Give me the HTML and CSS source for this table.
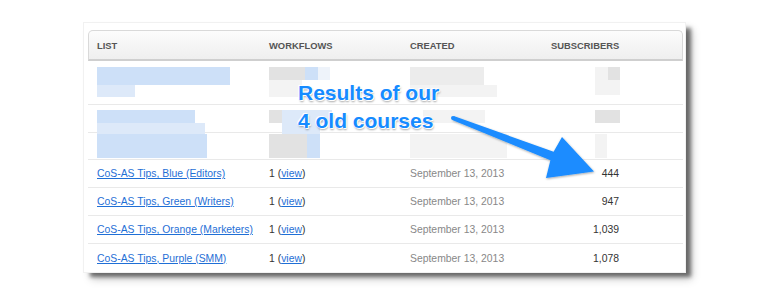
FILE: index.html
```html
<!DOCTYPE html>
<html>
<head>
<meta charset="utf-8">
<link rel="stylesheet" href="styles.css">
</head>
<body>
<div class="card">
  <div class="table">
    <div class="row head">
      <div class="cell">LIST</div>
      <div class="cell">WORKFLOWS</div>
      <div class="cell">CREATED</div>
      <div class="cell">SUBSCRIBERS</div>
    </div>
    <div class="row blur r1">
      <div class="cell">
        <div class="bar b-blue" style="width:133px;height:18px"></div>
        <div class="bar b-blue2" style="width:38px;height:12px"></div>
      </div>
      <div class="cell">
        <div class="seg">
          <div class="bar b-grey" style="width:36px;height:13px"></div>
          <div class="bar b-blue" style="width:13px;height:13px"></div>
          <div class="bar b-lt" style="width:12px;height:13px"></div>
        </div>
        <div class="bar b-lgrey" style="width:33px;height:17px"></div>
      </div>
      <div class="cell">
        <div class="bar b-grey2" style="width:74px;height:18px"></div>
        <div class="bar b-lgrey" style="width:87px;height:12px"></div>
      </div>
      <div class="cell end">
        <div class="seg">
          <div class="bar b-lgrey" style="width:13px;height:13px"></div>
          <div class="bar b-grey" style="width:12px;height:13px"></div>
        </div>
        <div class="bar b-lgrey" style="width:25px;height:15px"></div>
      </div>
    </div>
    <div class="row blur r2">
      <div class="cell">
        <div class="bar b-blue" style="width:98px;height:13px"></div>
        <div class="bar b-blue2" style="width:108px;height:12px"></div>
      </div>
      <div class="cell">
        <div class="seg">
          <div class="bar b-grey" style="width:13px;height:13px"></div>
          <div class="bar b-blue2" style="width:50px;height:13px"></div>
        </div>
        <div class="bar b-blue2 indent" style="width:38px;height:12px"></div>
      </div>
      <div class="cell">
        <div class="bar b-lgrey indent" style="width:62px;height:13px"></div>
      </div>
      <div class="cell end">
        <div class="bar b-grey" style="width:25px;height:13px"></div>
      </div>
    </div>
    <div class="row blur r3">
      <div class="cell">
        <div class="bar b-blue" style="width:110px;height:24px"></div>
      </div>
      <div class="cell">
        <div class="seg">
          <div class="bar b-grey" style="width:38px;height:24px"></div>
          <div class="bar b-blue" style="width:13px;height:24px"></div>
        </div>
      </div>
      <div class="cell">
        <div class="bar b-lgrey" style="width:97px;height:24px"></div>
      </div>
      <div class="cell end">
        <div class="bar b-lgrey" style="width:12px;height:24px"></div>
      </div>
    </div>
    <div class="row data">
      <div class="cell"><a href="#">CoS-AS Tips, Blue (Editors)</a></div>
      <div class="cell wf">1 (<a href="#">view</a>)</div>
      <div class="cell date">September 13, 2013</div>
      <div class="cell num">444</div>
    </div>
    <div class="row data">
      <div class="cell"><a href="#">CoS-AS Tips, Green (Writers)</a></div>
      <div class="cell wf">1 (<a href="#">view</a>)</div>
      <div class="cell date">September 13, 2013</div>
      <div class="cell num">947</div>
    </div>
    <div class="row data">
      <div class="cell"><a href="#">CoS-AS Tips, Orange (Marketers)</a></div>
      <div class="cell wf">1 (<a href="#">view</a>)</div>
      <div class="cell date">September 13, 2013</div>
      <div class="cell num">1,039</div>
    </div>
    <div class="row data last">
      <div class="cell"><a href="#">CoS-AS Tips, Purple (SMM)</a></div>
      <div class="cell wf">1 (<a href="#">view</a>)</div>
      <div class="cell date">September 13, 2013</div>
      <div class="cell num">1,078</div>
    </div>
  </div>
</div>
<div class="note">Results of our<br>4 old courses</div>
<svg class="arrow" width="770" height="306" viewBox="0 0 770 306">
  <defs>
    <filter id="sh" x="-10%" y="-10%" width="130%" height="130%">
      <feDropShadow dx="0.5" dy="1" stdDeviation="0.8" flood-color="#000" flood-opacity="0.35"/>
    </filter>
  </defs>
  <polygon filter="url(#sh)" fill="#1a8cff" points="453.7,116 553.6,151.8 562,137 594,171.5 546,178 550.4,160.2 452.3,120"/>
  <circle cx="453" cy="118" r="2" fill="#1a8cff"/>
</svg>
</body>
</html>
```
FILE: styles.css
```css
html, body {
  margin: 0;
  padding: 0;
  background: #fff;
}
body {
  position: relative;
  width: 770px;
  height: 306px;
  overflow: hidden;
  padding: 23px 0 0 84px;
  box-sizing: border-box;
  font-family: "Liberation Sans", Arial, Helvetica, sans-serif;
}
.card {
  width: 601px;
  height: 249px;
  background: #fff;
  box-sizing: border-box;
  padding: 7px 2px 0 4px;
  box-shadow: 0 0 0 1px #f1f1f1, 6px 5px 4px rgba(0, 0, 0, 0.5), 7px 7px 9px rgba(0, 0, 0, 0.2);
}
.table {
  width: 595px;
}
.row {
  display: grid;
  grid-template-columns: 172px 141px 141px 141px;
  border-bottom: 1px solid #e9e9e9;
  box-sizing: border-box;
}
.row.last {
  border-bottom: none;
}
.head {
  height: 31px;
  border: 1px solid #d9d9d9;
  border-bottom: 2px solid #cfcfcf;
  border-radius: 5px 5px 0 0;
  background: linear-gradient(#fcfcfc, #efefef);
  align-items: center;
  font-size: 9.4px;
  font-weight: bold;
  color: #555;
}
.head .cell {
  padding-left: 8px;
}
.blur .cell {
  padding-left: 9px;
  display: flex;
  flex-direction: column;
  filter: blur(0.6px);
}
.r1 { height: 44px; padding-top: 6px; }
.r2 { height: 28px; padding-top: 5px; }
.r3 { height: 27px; padding-top: 1px; }
.r2 .cell { padding-top: 0; }
.blur .cell.end {
  padding-left: 53px;
}
.seg {
  display: flex;
}
.indent {
  margin-left: 13px;
}
.bar {
  flex: none;
}
.b-blue { background: #cde0f8; }
.b-blue2 { background: #dde9f9; }
.b-lt { background: #eef3fa; }
.b-grey { background: #e2e2e2; }
.b-grey2 { background: #ececec; }
.b-lgrey { background: #f3f3f3; }
.data {
  height: 28px;
  align-items: center;
  font-size: 10.4px;
  color: #333;
}
.data .cell {
  padding-left: 9px;
}
.data a {
  color: #1f6fd6;
  text-decoration: underline;
}
.date {
  color: #888;
}
.data .cell.num {
  padding-left: 0;
  padding-right: 64px;
  text-align: right;
}
.note {
  position: absolute;
  left: 298px;
  top: 79px;
  font-size: 21px;
  line-height: 28px;
  font-weight: bold;
  color: #168bff;
  text-shadow: 0 0 1px #fff, 0 0 2px #fff, 1px 1px 0 #fff, -1px -1px 0 #fff, 1px 2px 2px rgba(0, 0, 0, 0.35);
}
.arrow {
  position: absolute;
  left: 0;
  top: 0;
}
```
